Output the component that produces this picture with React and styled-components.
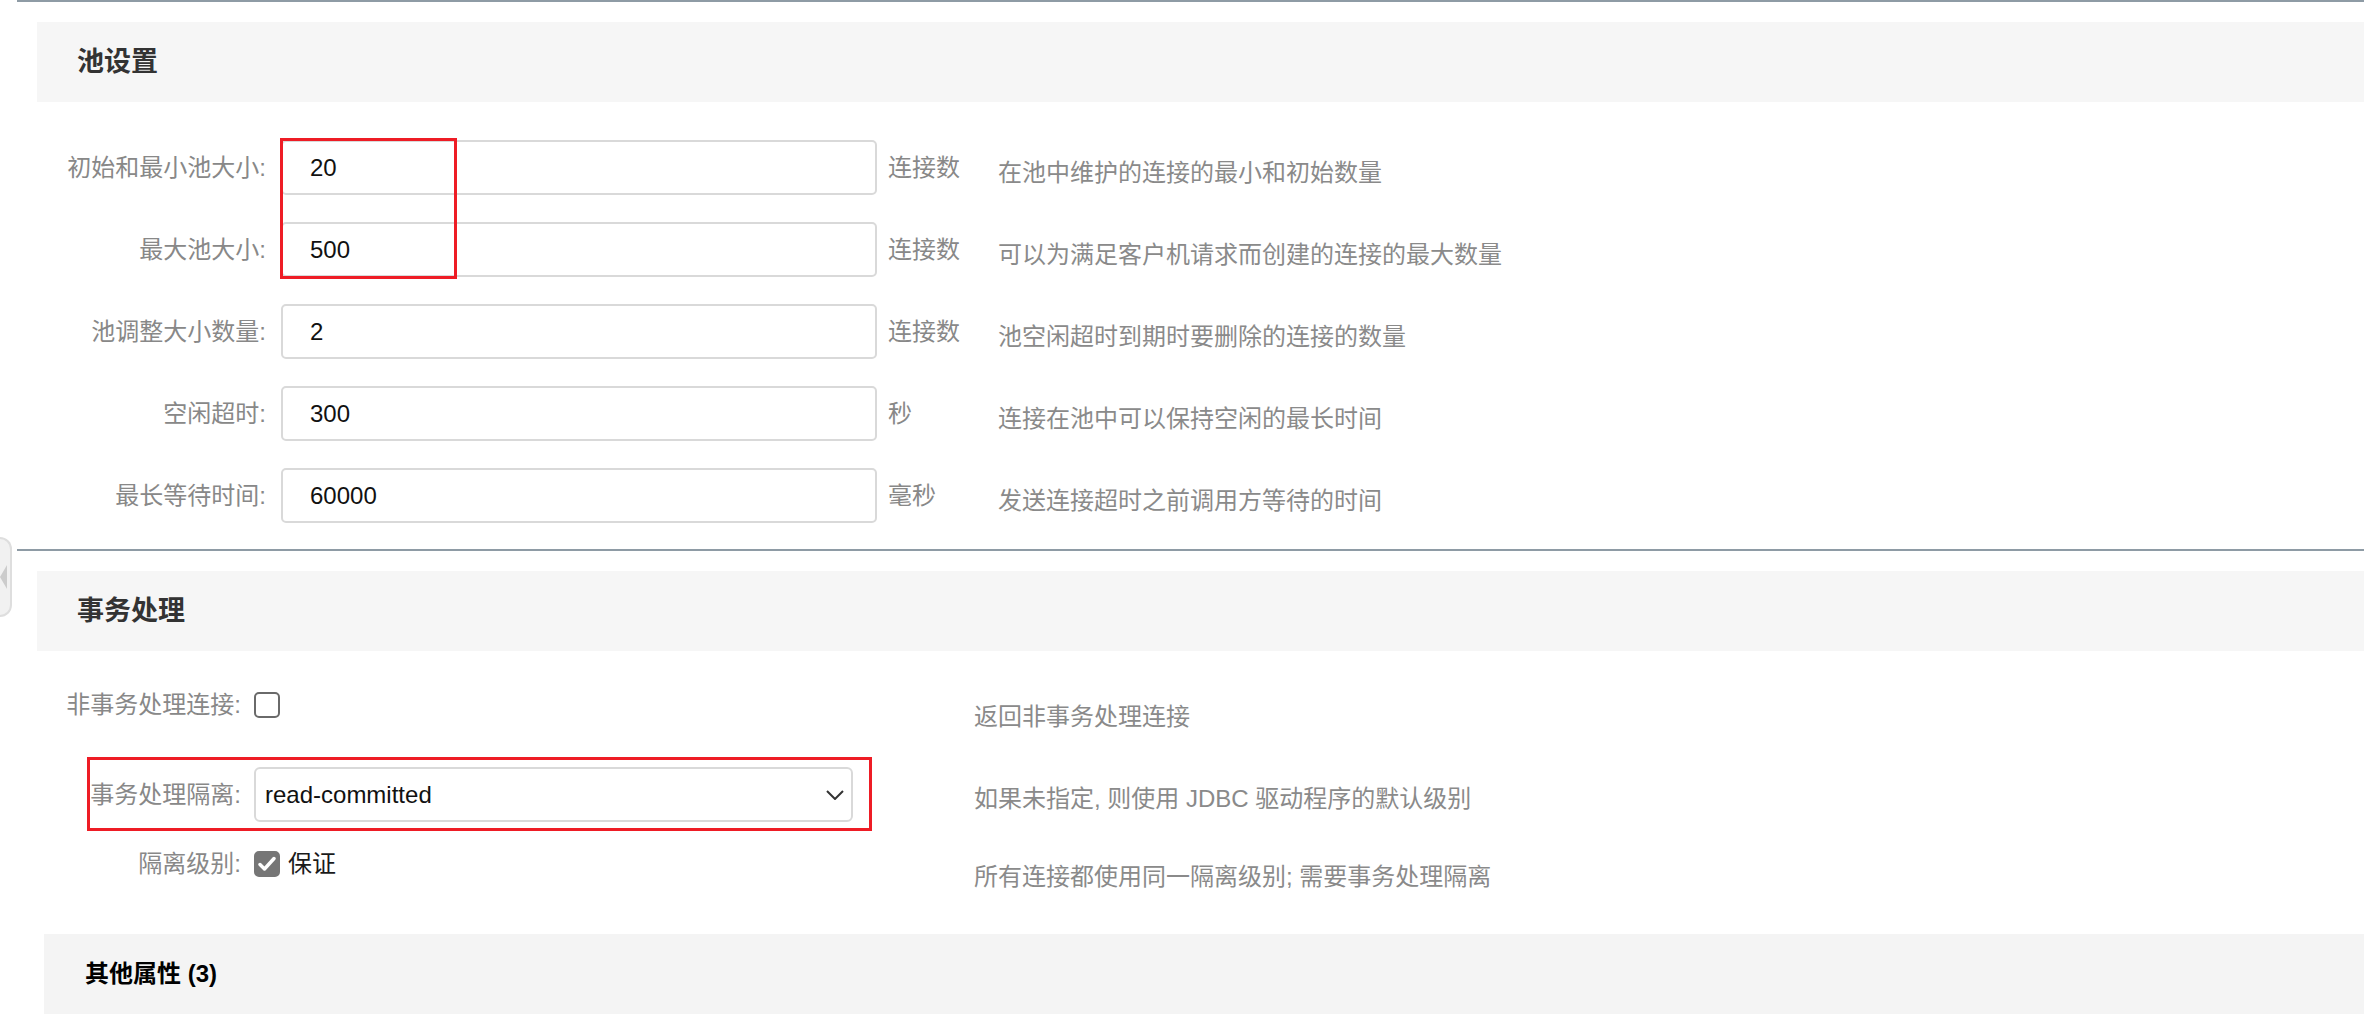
import styled, { createGlobalStyle } from "styled-components";

const GlobalStyle = createGlobalStyle`
  body {
    margin: 0;
    background: #ffffff;
    font-family: "Liberation Sans", "Noto Sans CJK SC", sans-serif;
  }
`;

const Page = styled.div`
  position: relative;
  width: 2364px;
  height: 1030px;
  overflow: hidden;
  background: #ffffff;
`;

const Section = styled.section`
  margin-left: 17px;
  padding-top: 20px;
  border-top: 2px solid #8e9ba5;
`;

const SectionHeader = styled.h2`
  margin: 0 0 0 20px;
  height: 80px;
  padding-left: 40px;
  background: #f6f6f6;
  font-size: 27px;
  font-weight: 700;
  line-height: 80px;
  color: #333333;
`;

const SubHeader = styled.h3`
  margin: 0 0 0 27px;
  height: 80px;
  padding-left: 41px;
  background: #f4f4f4;
  font-size: 24px;
  font-weight: 700;
  line-height: 80px;
  color: #000000;
`;

const FormBody = styled.div`
  position: relative;
  display: flex;
  flex-direction: column;
  gap: 27px;
  padding: 38px 0 26px;
`;

const TxBody = styled.div`
  display: flex;
  flex-direction: column;
  padding: 41px 0 57px;
`;

const Row = styled.div`
  position: relative;
  display: flex;
  align-items: center;
  height: ${(p) => p.$height}px;
  margin-top: ${(p) => p.$gap || 0}px;
`;

const Label = styled.label`
  flex: none;
  width: ${(p) => p.$width}px;
  padding-right: ${(p) => p.$pad}px;
  box-sizing: border-box;
  text-align: right;
  font-size: 24px;
  line-height: 30px;
  color: #888888;
  white-space: nowrap;
`;

const TextInput = styled.input`
  flex: none;
  width: 596px;
  height: 55px;
  box-sizing: border-box;
  padding: 0 0 0 27px;
  border: 2px solid #d9d9d9;
  border-radius: 5px;
  background: #ffffff;
  font-family: "Liberation Sans", sans-serif;
  font-size: 24px;
  color: #111111;
  outline: none;
`;

const Unit = styled.span`
  flex: none;
  width: 121px;
  box-sizing: border-box;
  padding-left: 11px;
  font-size: 24px;
  line-height: 30px;
  color: #888888;
`;

const Desc = styled.span`
  font-size: 24px;
  line-height: 30px;
  color: #8a8a8a;
  white-space: nowrap;
  padding-top: ${(p) => p.$drop * 2}px;
`;

const Control = styled.div`
  flex: none;
  width: 720px;
  display: flex;
  align-items: center;
  gap: 8px;
`;

const Box = styled.span`
  flex: none;
  display: flex;
  align-items: center;
  justify-content: center;
  width: 26px;
  height: 26px;
  box-sizing: border-box;
  border-radius: 5px;
  border: 2px solid ${(p) => (p.$checked ? "#767676" : "#6a6a6a")};
  background: ${(p) => (p.$checked ? "#767676" : "#ffffff")};
`;

const CheckText = styled.span`
  font-size: 24px;
  line-height: 30px;
  color: #1a1a1a;
`;

const SelectBox = styled.div`
  width: 599px;
  height: 55px;
  box-sizing: border-box;
  display: flex;
  align-items: center;
  justify-content: space-between;
  padding: 0 7px 0 9px;
  border: 2px solid #d9d9d9;
  border-radius: 6px;
  background: #ffffff;
  font-family: "Liberation Sans", sans-serif;
  font-size: 24px;
  color: #111111;
`;

const PoolHighlight = styled.div`
  position: absolute;
  left: 263px;
  top: 36px;
  width: 177px;
  height: 141px;
  box-sizing: border-box;
  border: 3px solid #ee1c25;
  pointer-events: none;
`;

const IsolationHighlight = styled.div`
  position: absolute;
  left: 70px;
  top: -10px;
  width: 785px;
  height: 74px;
  box-sizing: border-box;
  border: 3px solid #ee1c25;
  pointer-events: none;
`;

const SideHandle = styled.div`
  position: absolute;
  left: 0;
  top: 537px;
  width: 12px;
  height: 80px;
  box-sizing: border-box;
  display: flex;
  align-items: center;
  border: 2px solid #dedede;
  border-left: none;
  border-radius: 0 12px 12px 0;
  background: #f1f1f1;
`;

const Arrow = styled.span`
  width: 0;
  height: 0;
  border-top: 12px solid transparent;
  border-bottom: 12px solid transparent;
  border-right: 7px solid #cccccc;
`;

const poolRows = [
  { label: "初始和最小池大小:", value: "20", unit: "连接数", desc: "在池中维护的连接的最小和初始数量" },
  { label: "最大池大小:", value: "500", unit: "连接数", desc: "可以为满足客户机请求而创建的连接的最大数量" },
  { label: "池调整大小数量:", value: "2", unit: "连接数", desc: "池空闲超时到期时要删除的连接的数量" },
  { label: "空闲超时:", value: "300", unit: "秒", desc: "连接在池中可以保持空闲的最长时间" },
  { label: "最长等待时间:", value: "60000", unit: "毫秒", desc: "发送连接超时之前调用方等待的时间" },
];

function Checkbox({ checked }) {
  return (
    <Box $checked={checked}>
      {checked && (
        <svg width="18" height="16" viewBox="0 0 18 16">
          <path
            d="M2 8.5 L6.5 13 L16 2.5"
            fill="none"
            stroke="#ffffff"
            strokeWidth="3.4"
            strokeLinecap="round"
            strokeLinejoin="round"
          />
        </svg>
      )}
    </Box>
  );
}

function PoolRow({ row }) {
  return (
    <Row $height={55}>
      <Label $width={264} $pad={15}>
        {row.label}
      </Label>
      <TextInput defaultValue={row.value} />
      <Unit>{row.unit}</Unit>
      <Desc $drop={5.5}>{row.desc}</Desc>
    </Row>
  );
}

export default function App() {
  return (
    <>
      <GlobalStyle />
      <Page>
        <Section>
          <SectionHeader>池设置</SectionHeader>
          <FormBody>
            {poolRows.map((row) => (
              <PoolRow key={row.label} row={row} />
            ))}
            <PoolHighlight />
          </FormBody>
        </Section>

        <Section>
          <SectionHeader>事务处理</SectionHeader>
          <TxBody>
            <Row $height={26}>
              <Label $width={237} $pad={13}>
                非事务处理连接:
              </Label>
              <Control>
                <Checkbox />
              </Control>
              <Desc $drop={12}>返回非事务处理连接</Desc>
            </Row>

            <Row $height={55} $gap={49}>
              <Label $width={237} $pad={13}>
                事务处理隔离:
              </Label>
              <Control>
                <SelectBox>
                  <span>read-committed</span>
                  <svg width="18" height="10" viewBox="0 0 18 10">
                    <path
                      d="M1 1 L9 9 L17 1"
                      fill="none"
                      stroke="#333333"
                      strokeWidth="2"
                    />
                  </svg>
                </SelectBox>
              </Control>
              <Desc $drop={4.5}>如果未指定, 则使用 JDBC 驱动程序的默认级别</Desc>
              <IsolationHighlight />
            </Row>

            <Row $height={26} $gap={29}>
              <Label $width={237} $pad={13}>
                隔离级别:
              </Label>
              <Control>
                <Checkbox checked />
                <CheckText>保证</CheckText>
              </Control>
              <Desc $drop={13}>所有连接都使用同一隔离级别; 需要事务处理隔离</Desc>
            </Row>
          </TxBody>
          <SubHeader>其他属性 (3)</SubHeader>
        </Section>

        <SideHandle>
          <Arrow />
        </SideHandle>
      </Page>
    </>
  );
}
